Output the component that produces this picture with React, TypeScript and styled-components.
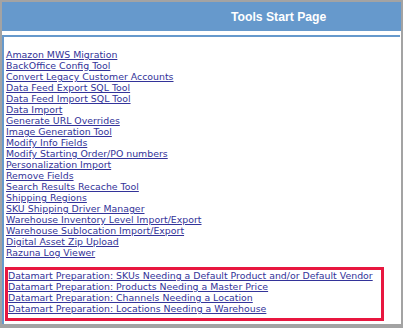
import styled, { createGlobalStyle } from "styled-components";

const GlobalStyle = createGlobalStyle`
  html, body {
    margin: 0;
    padding: 0;
    background: #ffffff;
  }
`;

const tools = [
  "Amazon MWS Migration",
  "BackOffice Config Tool",
  "Convert Legacy Customer Accounts",
  "Data Feed Export SQL Tool",
  "Data Feed Import SQL Tool",
  "Data Import",
  "Generate URL Overrides",
  "Image Generation Tool",
  "Modify Info Fields",
  "Modify Starting Order/PO numbers",
  "Personalization Import",
  "Remove Fields",
  "Search Results Recache Tool",
  "Shipping Regions",
  "SKU Shipping Driver Manager",
  "Warehouse Inventory Level Import/Export",
  "Warehouse Sublocation Import/Export",
  "Digital Asset Zip Upload",
  "Razuna Log Viewer",
];

const datamart = [
  "Datamart Preparation: SKUs Needing a Default Product and/or Default Vendor",
  "Datamart Preparation: Products Needing a Master Price",
  "Datamart Preparation: Channels Needing a Location",
  "Datamart Preparation: Locations Needing a Warehouse",
];

const App = () => {
  return (
    <>
      <GlobalStyle />
      <Frame>
        <Header>
          <Title>Tools Start Page</Title>
        </Header>
        <Content>
          <LinkList>
            {tools.map((name) => (
              <ToolLink key={name} href="#">
                {name}
              </ToolLink>
            ))}
          </LinkList>
          <Highlight>
            {datamart.map((name) => (
              <ToolLink key={name} href="#">
                {name}
              </ToolLink>
            ))}
          </Highlight>
        </Content>
      </Frame>
    </>
  );
};

const Frame = styled.div`
  box-sizing: border-box;
  width: 403px;
  height: 328px;
  border: 2px solid #a3a3a3;
  border-bottom-width: 4px;
  background: #ffffff;
  display: flex;
  flex-direction: column;
  overflow: hidden;
`;

const Header = styled.div`
  height: 29px;
  background-color: #6699cc;
  display: flex;
  align-items: center;
  padding-left: 229px;
  margin-bottom: 4px;
`;

const Title = styled.span`
  font-family: "Liberation Sans", Arial, sans-serif;
  font-weight: bold;
  font-size: 12.2px;
  color: #ffffff;
`;

const Content = styled.div`
  flex: 1;
  border-top: 2px solid #6699cc;
  border-left: 2px solid #6699cc;
  margin-right: 1px;
  padding: 12px 0 0 2px;
`;

const LinkList = styled.div`
  display: flex;
  flex-direction: column;
  align-items: flex-start;
`;

const Highlight = styled.div`
  display: flex;
  flex-direction: column;
  align-items: flex-start;
  width: 373px;
  margin: 9px 0 0 -1px;
  padding: 0 0 4px 0;
  border: 3px solid #e8173f;
`;

const ToolLink = styled.a`
  font-family: "DejaVu Sans", Verdana, sans-serif;
  font-size: 9.4px;
  line-height: 11px;
  color: #333399;
  text-decoration: underline;
  white-space: nowrap;
`;

export default App;
